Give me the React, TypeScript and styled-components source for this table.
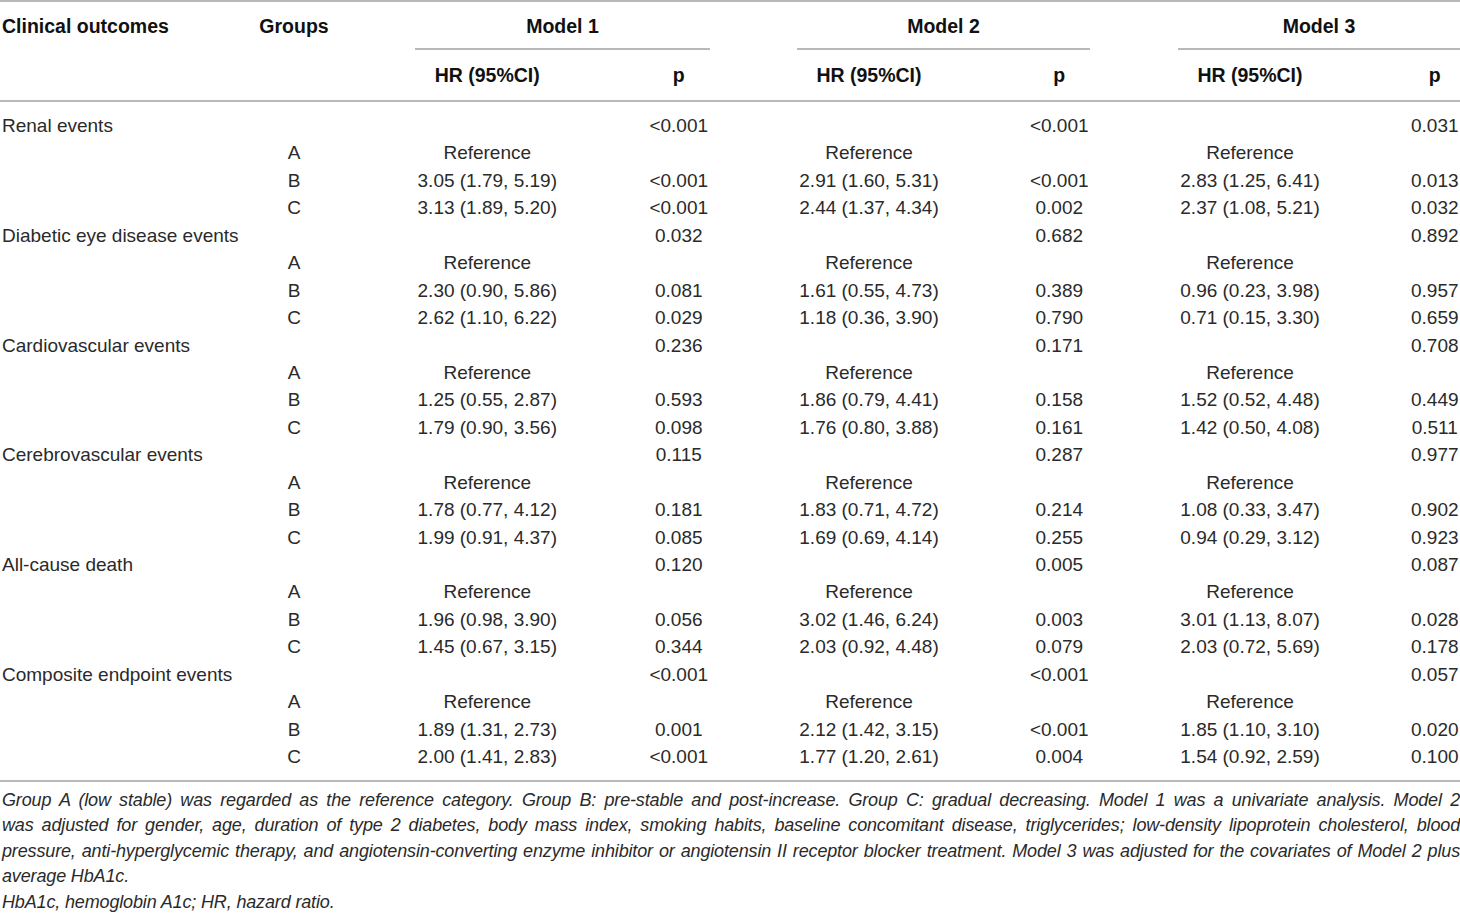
import React from "react";
import styled, { createGlobalStyle } from "styled-components";

const GlobalStyle = createGlobalStyle`
  html, body { margin: 0; padding: 0; background: #ffffff; }
  body { font-family: "Liberation Sans", Arial, sans-serif; color: #2a2a2a; }
`;

const COLS = "197px 194px 192.5px 190.5px 190px 190.5px 191px 1fr";

const Page = styled.div`
  width: 1460px;
  height: 916px;
  overflow: hidden;
`;

const Table = styled.div`
  border-top: 2px solid #b9b9b9;
  border-bottom: 2px solid #b9b9b9;
`;

const Head = styled.div`
  border-bottom: 2px solid #b9b9b9;
`;

const HeadRow = styled.div<{ $h: number }>`
  display: grid;
  grid-template-columns: ${COLS};
  height: ${(p) => p.$h}px;
  font-weight: 700;
  font-size: 19.5px;
  color: #111;
`;

const HeadCell = styled.div<{ $align?: "left" | "center"; $pad?: number }>`
  display: flex;
  align-items: center;
  justify-content: ${(p) => (p.$align === "left" ? "flex-start" : "center")};
  padding-left: ${(p) => p.$pad ?? 0}px;
  white-space: nowrap;
`;

const ModelCell = styled.div<{ $left: number; $right: number }>`
  grid-column: span 2;
  margin-left: ${(p) => p.$left}px;
  margin-right: ${(p) => p.$right}px;
  border-bottom: 2px solid #b9b9b9;
  display: flex;
  align-items: center;
  justify-content: center;
  padding-top: 2px;
  white-space: nowrap;
`;

const Body = styled.div`
  padding: 10px 0 9px;
`;

const Row = styled.div`
  display: grid;
  grid-template-columns: ${COLS};
  height: 27.45px;
  font-size: 19px;
  line-height: 27.45px;
`;

const Cell = styled.div<{ $align?: "left" | "center"; $pad?: number }>`
  text-align: ${(p) => p.$align ?? "center"};
  padding-left: ${(p) => p.$pad ?? 0}px;
  white-space: nowrap;
`;

const Notes = styled.div`
  margin-top: 6px;
  font-style: italic;
  font-size: 18px;
  line-height: 25.6px;
  letter-spacing: -0.15px;
  color: #2a2a2a;
  padding-left: 2px;
`;

const NoteLine = styled.div<{ $justify?: boolean }>`
  text-align: ${(p) => (p.$justify ? "justify" : "left")};
  text-align-last: ${(p) => (p.$justify ? "justify" : "left")};
  white-space: ${(p) => (p.$justify ? "normal" : "nowrap")};
`;

type Outcome = {
  name: string;
  p: [string, string, string];
  b: string[];
  c: string[];
};

const outcomes: Outcome[] = [
  {
    name: "Renal events",
    p: ["<0.001", "<0.001", "0.031"],
    b: ["3.05 (1.79, 5.19)", "<0.001", "2.91 (1.60, 5.31)", "<0.001", "2.83 (1.25, 6.41)", "0.013"],
    c: ["3.13 (1.89, 5.20)", "<0.001", "2.44 (1.37, 4.34)", "0.002", "2.37 (1.08, 5.21)", "0.032"],
  },
  {
    name: "Diabetic eye disease events",
    p: ["0.032", "0.682", "0.892"],
    b: ["2.30 (0.90, 5.86)", "0.081", "1.61 (0.55, 4.73)", "0.389", "0.96 (0.23, 3.98)", "0.957"],
    c: ["2.62 (1.10, 6.22)", "0.029", "1.18 (0.36, 3.90)", "0.790", "0.71 (0.15, 3.30)", "0.659"],
  },
  {
    name: "Cardiovascular events",
    p: ["0.236", "0.171", "0.708"],
    b: ["1.25 (0.55, 2.87)", "0.593", "1.86 (0.79, 4.41)", "0.158", "1.52 (0.52, 4.48)", "0.449"],
    c: ["1.79 (0.90, 3.56)", "0.098", "1.76 (0.80, 3.88)", "0.161", "1.42 (0.50, 4.08)", "0.511"],
  },
  {
    name: "Cerebrovascular events",
    p: ["0.115", "0.287", "0.977"],
    b: ["1.78 (0.77, 4.12)", "0.181", "1.83 (0.71, 4.72)", "0.214", "1.08 (0.33, 3.47)", "0.902"],
    c: ["1.99 (0.91, 4.37)", "0.085", "1.69 (0.69, 4.14)", "0.255", "0.94 (0.29, 3.12)", "0.923"],
  },
  {
    name: "All-cause death",
    p: ["0.120", "0.005", "0.087"],
    b: ["1.96 (0.98, 3.90)", "0.056", "3.02 (1.46, 6.24)", "0.003", "3.01 (1.13, 8.07)", "0.028"],
    c: ["1.45 (0.67, 3.15)", "0.344", "2.03 (0.92, 4.48)", "0.079", "2.03 (0.72, 5.69)", "0.178"],
  },
  {
    name: "Composite endpoint events",
    p: ["<0.001", "<0.001", "0.057"],
    b: ["1.89 (1.31, 2.73)", "0.001", "2.12 (1.42, 3.15)", "<0.001", "1.85 (1.10, 3.10)", "0.020"],
    c: ["2.00 (1.41, 2.83)", "<0.001", "1.77 (1.20, 2.61)", "0.004", "1.54 (0.92, 2.59)", "0.100"],
  },
];

const LAST_PAD = 64;

function DataRow({ group, values }: { group: string; values: string[] }) {
  return (
    <Row>
      <Cell />
      <Cell>{group}</Cell>
      {values.map((v, i) => (
        <Cell key={i} $pad={i === 5 ? LAST_PAD : 0}>
          {v}
        </Cell>
      ))}
    </Row>
  );
}

export default function App() {
  return (
    <Page>
      <GlobalStyle />
      <Table>
        <Head>
          <HeadRow $h={48}>
            <HeadCell $align="left" $pad={2}>Clinical outcomes</HeadCell>
            <HeadCell>Groups</HeadCell>
            <ModelCell $left={24} $right={64}>Model 1</ModelCell>
            <ModelCell $left={23} $right={64.5}>Model 2</ModelCell>
            <ModelCell $left={23.5} $right={0}>Model 3</ModelCell>
          </HeadRow>
          <HeadRow $h={50}>
            <HeadCell />
            <HeadCell />
            <HeadCell>HR (95%CI)</HeadCell>
            <HeadCell>p</HeadCell>
            <HeadCell>HR (95%CI)</HeadCell>
            <HeadCell>p</HeadCell>
            <HeadCell>HR (95%CI)</HeadCell>
            <HeadCell $pad={LAST_PAD}>p</HeadCell>
          </HeadRow>
        </Head>
        <Body>
          {outcomes.map((o) => (
            <React.Fragment key={o.name}>
              <Row>
                <Cell $align="left" $pad={2}>{o.name}</Cell>
                <Cell />
                <Cell />
                <Cell>{o.p[0]}</Cell>
                <Cell />
                <Cell>{o.p[1]}</Cell>
                <Cell />
                <Cell $pad={LAST_PAD}>{o.p[2]}</Cell>
              </Row>
              <DataRow group="A" values={["Reference", "", "Reference", "", "Reference", ""]} />
              <DataRow group="B" values={o.b} />
              <DataRow group="C" values={o.c} />
            </React.Fragment>
          ))}
        </Body>
      </Table>
      <Notes>
        <NoteLine $justify>
          Group A (low stable) was regarded as the reference category. Group B: pre-stable and post-increase. Group C: gradual decreasing. Model 1 was a univariate analysis. Model 2
        </NoteLine>
        <NoteLine $justify>
          was adjusted for gender, age, duration of type 2 diabetes, body mass index, smoking habits, baseline concomitant disease, triglycerides; low-density lipoprotein cholesterol, blood
        </NoteLine>
        <NoteLine $justify>
          pressure, anti-hyperglycemic therapy, and angiotensin-converting enzyme inhibitor or angiotensin II receptor blocker treatment. Model 3 was adjusted for the covariates of Model 2 plus
        </NoteLine>
        <NoteLine>average HbA1c.</NoteLine>
        <NoteLine>HbA1c, hemoglobin A1c; HR, hazard ratio.</NoteLine>
      </Notes>
    </Page>
  );
}
